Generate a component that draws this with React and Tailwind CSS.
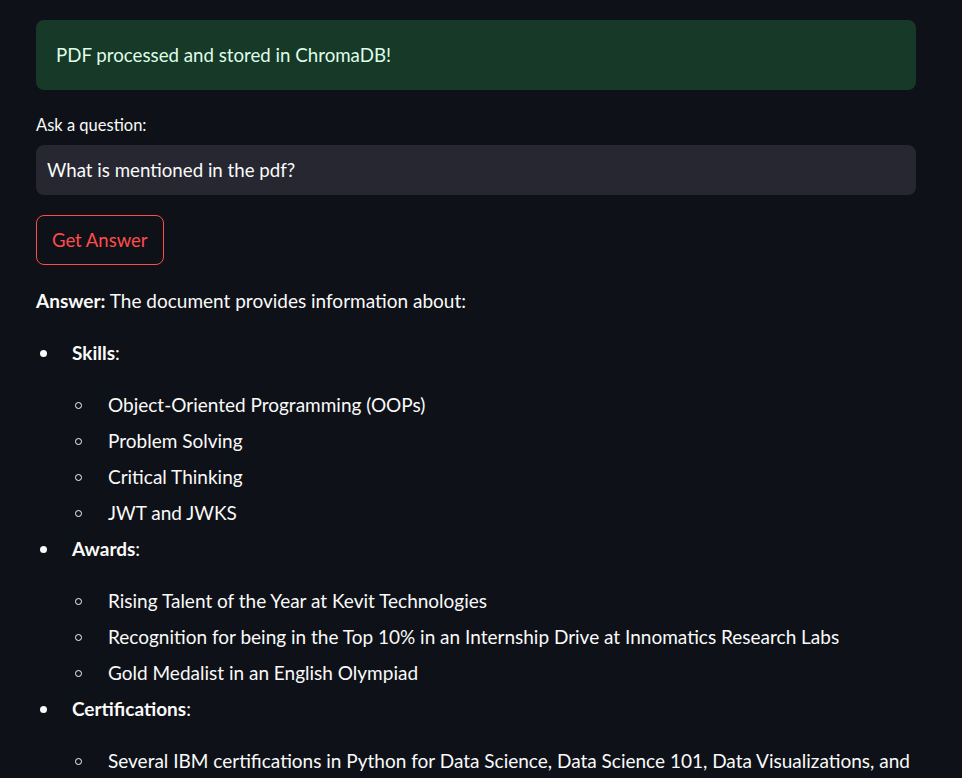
import React from 'react';

const sections = [
  { title: 'Skills', items: ['Object-Oriented Programming (OOPs)', 'Problem Solving', 'Critical Thinking', 'JWT and JWKS'] },
  { title: 'Awards', items: ['Rising Talent of the Year at Kevit Technologies', 'Recognition for being in the Top 10% in an Internship Drive at Innomatics Research Labs', 'Gold Medalist in an English Olympiad'] },
  { title: 'Certifications', items: ['Several IBM certifications in Python for Data Science, Data Science 101, Data Visualizations, and'] },
];

function Disc() {
  return <span className="w-[36px] shrink-0 flex items-center h-[32px] pl-[4px]"><span className="w-[7px] h-[7px] rounded-full bg-[#fafafa]"></span></span>;
}

function Circle() {
  return <span className="w-[36px] shrink-0 flex items-center h-[32px] pl-[3px]"><span className="w-[7px] h-[7px] rounded-full border border-[#fafafa]"></span></span>;
}

export default function App() {
  return (
    <div className="min-h-screen bg-[#0e1117] text-[#fafafa] text-[19px] leading-[32px] overflow-hidden" style={{ height: 778 }}>
      <div className="w-[880px] ml-[36px] pt-[20px] flex flex-col gap-[20px]" style={{ fontFamily: 'Lato, "Noto Sans", sans-serif' }}>
        <div className="h-[70px] rounded-[8px] bg-[#173928] text-[#dffde9] text-[18.7px] px-[20px] flex items-center">
          PDF processed and stored in ChromaDB!
        </div>
        <div>
          <div className="h-[35px] text-[16.5px] leading-[30px] pb-[5px] flex items-center">Ask a question:</div>
          <div className="h-[50px] rounded-[8px] bg-[#262730] text-[18.7px] px-[11px] flex items-center">What is mentioned in the pdf?</div>
        </div>
        <div>
          <button className="h-[50px] px-[15px] rounded-[8px] border border-[#ff4b4b] text-[#ff4b4b] text-[18.5px] bg-transparent">Get Answer</button>
        </div>
        <div>
          <p className="mb-[20px]"><span className="font-bold">Answer:</span> The document provides information about:</p>
          <ul>
            {sections.map((s) => (
              <li key={s.title} className="flex mb-[4px]">
                <Disc />
                <div className="flex-1">
                  <p className="mb-[20px]"><span className="font-bold">{s.title}</span>:</p>
                  <ul className="flex flex-col gap-[4px]">
                    {s.items.map((it) => (
                      <li key={it} className="flex">
                        <Circle />
                        <span>{it}</span>
                      </li>
                    ))}
                  </ul>
                </div>
              </li>
            ))}
          </ul>
        </div>
      </div>
    </div>
  );
}
